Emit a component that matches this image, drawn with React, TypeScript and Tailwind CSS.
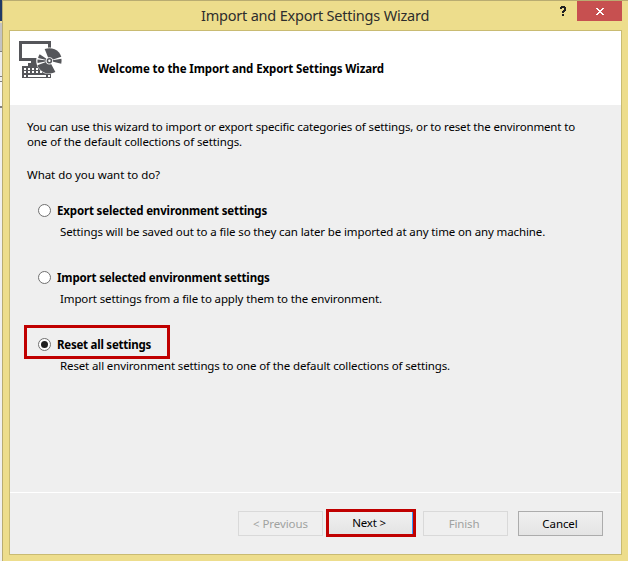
import React from 'react';

function sector(from: number, to: number, r: number) {
  const p = (a: number) =>
    `${(49.4 + r * Math.cos((a * Math.PI) / 180)).toFixed(2)} ${(60.8 + r * Math.sin((a * Math.PI) / 180)).toFixed(2)}`;
  return `M49.4 60.8L${p(from)}A${r} ${r} 0 0 1 ${p(to)}Z`;
}

function WizardIcon() {
  return (
    <svg className="block shrink-0" width="46" height="42" viewBox="18 39 46 42" fill="#55565a" aria-hidden="true">
      <path fillRule="evenodd" d="M19 41h32v20H19zM22 44v14h26V44z" />
      <path d="M31 61h9v2h2v3H28v-3h3z" />
      <path d="M22 66h29v12H22z" />
      <g fill="#fff">
        {[0, 1, 2, 3, 4, 5, 6].map((i) => (
          <React.Fragment key={i}>
            <rect x={24 + i * 4} y="68" width="2" height="2" />
            <rect x={24 + i * 4} y="71" width="2" height="2" />
          </React.Fragment>
        ))}
        <path d="M24 75h2v2h-2zM28 75h18v2H28zM48 75h2v2h-2z" />
        <circle cx="49.4" cy="60.8" r="13.2" />
      </g>
      <path d={sector(-112, -19, 12.6)} />
      <path d={sector(-10, 14, 12.2)} />
      <path d={sector(62, 160, 12.8)} />
      <path d={sector(169, 186, 12)} />
      <path d={sector(194, 214, 11.7)} />
      <circle cx="49.4" cy="60.8" r="3.6" fill="#fff" />
      <circle cx="49.4" cy="60.8" r="2" fill="none" stroke="#55565a" strokeWidth="1.6" />
    </svg>
  );
}

function Option({ title, titleClass, text, textClass, checked = false }: {
  title: string; titleClass: string; text: string; textClass: string; checked?: boolean;
}) {
  return (
    <div className="h-[67px]">
      <div className={`-ml-[3px] flex h-[34px] w-[146px] items-start border-3 pl-[11px] ${checked ? 'border-[#c00000]' : 'border-transparent'}`}>
        <span className="mt-[10px] flex size-[13px] shrink-0 items-center justify-center rounded-full border border-[#707070] bg-white">
          {checked && <span className="size-[7px] rounded-full bg-[#212121]" />}
        </span>
        <span className={`mt-[9px] ml-[6px] leading-4 font-bold whitespace-nowrap ${titleClass}`}>{title}</span>
      </div>
      <div className={`-mt-px pl-[33px] leading-4 whitespace-nowrap ${textClass}`}>{text}</div>
    </div>
  );
}

export default function App() {
  return (
    <div className="flex h-[561px] w-[628px] overflow-hidden bg-[#efefef] font-['Noto_Sans','Open_Sans',sans-serif] text-[11.5px] text-black">
      <div className="flex w-[2px] shrink-0 flex-col">
        <div className="h-[21px] bg-[#213a66]" />
        <div className="h-[2px] bg-[#f0dfa0]" />
        <div className="h-[28px] bg-[#c3c3c3]" />
        <div className="h-[26px] border-y border-[#808080] bg-[#ececec]" />
        <div className="h-[4px]" />
        <div className="h-[27px] border-t border-b-2 border-[#808080] bg-[#f8f8f8]" />
        <div className="flex-1 bg-[#f0f0f0]" />
      </div>
      <div className="flex min-w-0 flex-1 flex-col border-t border-l border-[#b9ac71] bg-[#eddd8c]">
        <header className="flex h-[29px] shrink-0">
          <div className="w-[135px]" />
          <h1 className="flex-1 pl-[63px] pt-[4px] text-[14.5px] leading-[20px] tracking-[-0.21px] whitespace-nowrap text-[#2d2d2d]">
            Import and Export Settings Wizard
          </h1>
          <svg className="mt-[5px] mr-[10px] block" width="7" height="11" viewBox="0 0 7 11" fill="#212121" shapeRendering="crispEdges" aria-label="Help">
            <path d="M1 0h4v1h1v4H5v1H4v1H2V5h1V4h1V2H2v1H0V1h1zM2 8h2v2H2z" />
          </svg>
          <button className="flex h-[20px] w-[45px] items-center justify-center bg-[#c75050]" aria-label="Close">
            <svg className="mt-px ml-px block" width="8" height="7" viewBox="0 0 8 7" fill="#fff" shapeRendering="crispEdges">
              <path d="M0 0h2v1h1v1h2V1h1V0h2v1H7v1H6v1H5v1h1v1h1v1h1v1H6V6H5V5H3v1H2v1H0V6h1V5h1V4h1V3H2V2H1V1H0z" />
            </svg>
          </button>
          <div className="w-[6px]" />
        </header>
        <main className="ml-[6px] flex h-[525px] w-[613px] flex-col border border-[#c9bb72] bg-[#efefef]">
          <section className="flex h-[74px] shrink-0 bg-white pt-[8px] pl-[8px]">
            <WizardIcon />
            <h2 className="pt-[22px] pl-[34px] leading-4 font-bold tracking-[-0.1px] whitespace-nowrap">
              Welcome to the Import and Export Settings Wizard
            </h2>
          </section>
          <section className="h-[387px] shrink-0 pt-[14px] pl-[17px]">
            <p className="leading-[15px] tracking-[-0.145px] whitespace-nowrap">
              You can use this wizard to import or export specific categories of settings, or to reset the environment to
              <br />
              <span className="tracking-[-0.1px]">one of the default collections of settings.</span>
            </p>
            <p className="mt-[18px] leading-[15px] tracking-[-0.05px]">What do you want to do?</p>
            <div className="mt-[9px]">
              <Option title="Export selected environment settings" titleClass="tracking-[-0.155px]" text="Settings will be saved out to a file so they can later be imported at any time on any machine." textClass="tracking-[-0.12px]" />
              <Option title="Import selected environment settings" titleClass="tracking-[-0.155px]" text="Import settings from a file to apply them to the environment." textClass="tracking-[-0.13px]" />
              <Option checked title="Reset all settings" titleClass="tracking-[-0.24px]" text="Reset all environment settings to one of the default collections of settings." textClass="tracking-[-0.13px]" />
            </div>
          </section>
          <footer className="flex flex-1 items-start border-t border-white pr-[17px] pl-[228px]">
            <button disabled className="mt-[18px] h-[25px] w-[85px] border border-[#d9d9d9] tracking-[-0.07px] text-[#a0a2a0]">&lt; Previous</button>
            <button className="mt-[16px] ml-[3px] flex h-[28px] w-[90px] border-3 border-[#c00000] bg-linear-to-b from-[#f0f0f0] to-[#e4e4e4]">
              <span className="flex h-full flex-1 items-center justify-center border-r border-[#3399ff] pr-[3px] tracking-[-0.2px]">Next &gt;</span>
            </button>
            <button disabled className="mt-[18px] ml-[7px] h-[25px] w-[85px] border border-[#d9d9d9] pr-[3px] tracking-[-0.15px] text-[#a0a2a0]">Finish</button>
            <button className="mt-[18px] ml-[10px] h-[25px] w-[85px] border border-[#acacac] bg-linear-to-b from-[#f0f0f0] to-[#e4e4e4] pr-px tracking-[-0.07px]">Cancel</button>
          </footer>
        </main>
      </div>
    </div>
  );
}
